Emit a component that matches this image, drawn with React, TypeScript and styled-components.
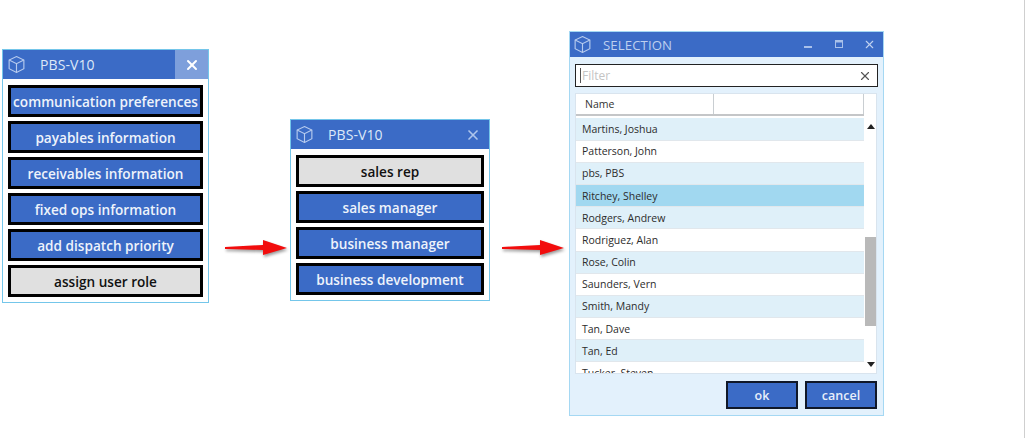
import styled, { createGlobalStyle } from 'styled-components'
import { X } from 'lucide-react'

const GlobalStyle = createGlobalStyle`
  html, body {
    margin: 0;
    padding: 0;
    background: #fff;
  }
  body {
    font-family: 'Open Sans', 'Noto Sans', sans-serif;
  }
`

const Desktop = styled.div`
  position: relative;
  width: 1025px;
  height: 438px;
  overflow: hidden;
  background: #fff;
  border-right: 1px solid #cfcfcf;
  box-sizing: border-box;
`

const Window = styled.div<{ $x: number; $y: number; $w: number; $h: number }>`
  position: absolute;
  left: ${(p) => p.$x}px;
  top: ${(p) => p.$y}px;
  width: ${(p) => p.$w}px;
  height: ${(p) => p.$h}px;
  box-sizing: border-box;
  border: 1px solid #74c6ea;
  background: #fff;
  display: flex;
  flex-direction: column;
`

const TitleBar = styled.div`
  height: 29px;
  flex: none;
  background: #3b6bc6;
  color: #dde8f8;
  display: flex;
  align-items: center;
  padding-left: 5px;
`

const TitleText = styled.span`
  margin-left: 15px;
  font-size: 14px;
  letter-spacing: 0.1px;
  flex: 1;
`

const CloseBox = styled.div<{ $active?: boolean }>`
  width: ${(p) => (p.$active ? '33px' : '32px')};
  align-self: stretch;
  display: flex;
  align-items: center;
  justify-content: center;
  background: ${(p) => (p.$active ? '#7e9fdb' : 'transparent')};
  color: ${(p) => (p.$active ? '#fff' : '#aec5ec')};
`

const ButtonStack = styled.div`
  display: flex;
  flex-direction: column;
  gap: 4px;
  padding: 6px 5px 0;
`

const ActionButton = styled.div<{ $muted?: boolean }>`
  height: 32px;
  box-sizing: border-box;
  border: 3px solid #000;
  background: ${(p) => (p.$muted ? '#e0e0e0' : '#3b6bc6')};
  color: ${(p) => (p.$muted ? '#111' : '#eef3fb')};
  font-size: 13.6px;
  font-weight: 600;
  display: flex;
  align-items: center;
  justify-content: center;
  white-space: nowrap;
`

const SelectionWindow = styled(Window)`
  background: #e3f1fc;
  border-color: #a5d8f3;
`

const SelectionTitle = styled(TitleBar)`
  height: 25px;
  color: #bdd0ef;
  padding-left: 4px;
`

const SelectionText = styled(TitleText)`
  margin-left: 12px;
  font-size: 13.2px;
`

const WindowControl = styled.div`
  width: 31px;
  margin-right: 1.5px;
  align-self: stretch;
  display: flex;
  align-items: center;
  justify-content: center;

  &:last-child {
    width: 27px;
    margin-right: 0;
  }
`

const SelectionBody = styled.div`
  flex: 1;
  display: flex;
  flex-direction: column;
  padding: 7px 5px 6px;
  min-height: 0;
`

const FilterBox = styled.div`
  height: 23px;
  flex: none;
  box-sizing: border-box;
  border: 1px solid #222;
  background: #fff;
  display: flex;
  align-items: center;
  padding: 0 5px 0 4px;
  color: #c4c4c4;
  font-size: 12px;
`

const Caret = styled.span`
  width: 1px;
  height: 15px;
  background: #555;
  margin-right: 1px;
`

const FilterLabel = styled.span`
  flex: 1;
`

const Grid = styled.div`
  margin: 6px 1px 0 0;
  height: 281px;
  flex: none;
  box-sizing: border-box;
  border: 1px solid #d9e4ee;
  background: #fff;
  display: flex;
  overflow: hidden;
`

const GridMain = styled.div`
  width: 288px;
  flex: none;
  display: flex;
  flex-direction: column;
  overflow: hidden;
`

const HeaderRow = styled.div`
  height: 22px;
  flex: none;
  box-sizing: border-box;
  border-bottom: 2px solid #c4c6c8;
  margin-bottom: 2.4px;
  display: flex;
  background: #fff;
  color: #333;
  font-size: 10.5px;
`

const HeaderCell = styled.div<{ $w: number }>`
  width: ${(p) => p.$w}px;
  box-sizing: border-box;
  padding-left: 9px;
  display: flex;
  align-items: center;
  border-right: 1px solid #c9ced2;
`

const NameRow = styled.div<{ $tone: 'plain' | 'alt' | 'selected' }>`
  height: 22.2px;
  flex: none;
  box-sizing: border-box;
  border-bottom: 1px solid #e1e7ec;
  padding-left: 6px;
  display: flex;
  align-items: center;
  color: #2c2c2c;
  font-size: 10.5px;
  background: ${(p) =>
    p.$tone === 'selected' ? '#a1d8f0' : p.$tone === 'alt' ? '#dff0f9' : '#fff'};
`

const ScrollTrack = styled.div`
  flex: 1;
  position: relative;
`

const ScrollThumb = styled.div`
  position: absolute;
  left: 1px;
  top: 143px;
  width: 11px;
  height: 89px;
  background: #b9b9b9;
`

const ScrollArrow = styled.div<{ $down?: boolean }>`
  position: absolute;
  left: 3px;
  ${(p) => (p.$down ? 'bottom: 6px;' : 'top: 30px;')}
  width: 0;
  height: 0;
  border-left: 4px solid transparent;
  border-right: 4px solid transparent;
  ${(p) => (p.$down ? 'border-top: 5px solid #222;' : 'border-bottom: 5px solid #222;')}
`

const DialogFooter = styled.div`
  display: flex;
  justify-content: flex-end;
  gap: 7px;
  margin-top: 7px;
  padding-right: 1px;
`

const DialogButton = styled.div`
  width: 72px;
  height: 28px;
  box-sizing: border-box;
  border: 2px solid #101828;
  background: #3b6bc6;
  color: #e8effa;
  font-size: 12.5px;
  font-weight: 600;
  display: flex;
  align-items: center;
  justify-content: center;
`

const ArrowMark = styled.svg<{ $x: number; $y: number }>`
  position: absolute;
  left: ${(p) => p.$x}px;
  top: ${(p) => p.$y}px;
  filter: drop-shadow(1px 2px 1.5px rgba(0, 0, 0, 0.4));
`

function CubeIcon() {
  return (
    <svg width="17" height="17" viewBox="1 1 15 15" fill="none" stroke="#b7cbee" strokeWidth="1">
      <path d="M8.5 1.5 15 4.6v7.6l-6.5 3.3L2 12.2V4.6z" />
      <path d="M2 4.6l6.5 3.2L15 4.6M8.5 7.8v7.7" />
    </svg>
  )
}

function RedArrow({ x, y }: { x: number; y: number }) {
  return (
    <ArrowMark $x={x} $y={y} width="70" height="24" viewBox="0 0 70 24">
      <path d="M1 8 L39 6 L39 1 L63 9 L39 16 L39 11 L1 10z" fill="#f20d0d" />
    </ArrowMark>
  )
}

const firstMenu = [
  'communication preferences',
  'payables information',
  'receivables information',
  'fixed ops information',
  'add dispatch priority',
]

const secondMenu = ['sales manager', 'business manager', 'business development']

const names = [
  'Martins, Joshua',
  'Patterson, John',
  'pbs, PBS',
  'Ritchey, Shelley',
  'Rodgers, Andrew',
  'Rodriguez, Alan',
  'Rose, Colin',
  'Saunders, Vern',
  'Smith, Mandy',
  'Tan, Dave',
  'Tan, Ed',
  'Tucker, Steven',
]

const toneFor = (index: number) => {
  if (index === 3) return 'selected'
  return index % 2 === 0 ? 'alt' : 'plain'
}

export default function App() {
  return (
    <>
      <GlobalStyle />
      <Desktop>
        <Window $x={2} $y={49} $w={207} $h={254}>
          <TitleBar>
            <CubeIcon />
            <TitleText>PBS-V10</TitleText>
            <CloseBox $active>
              <X size={16} strokeWidth={3} />
            </CloseBox>
          </TitleBar>
          <ButtonStack>
            {firstMenu.map((label) => (
              <ActionButton key={label}>{label}</ActionButton>
            ))}
            <ActionButton $muted>assign user role</ActionButton>
          </ButtonStack>
        </Window>

        <RedArrow x={224} y={239} />

        <Window $x={290} $y={119} $w={200} $h={182}>
          <TitleBar>
            <CubeIcon />
            <TitleText>PBS-V10</TitleText>
            <CloseBox>
              <X size={16} strokeWidth={2.5} />
            </CloseBox>
          </TitleBar>
          <ButtonStack>
            <ActionButton $muted>sales rep</ActionButton>
            {secondMenu.map((label) => (
              <ActionButton key={label}>{label}</ActionButton>
            ))}
          </ButtonStack>
        </Window>

        <RedArrow x={501} y={239} />

        <SelectionWindow $x={569} $y={31} $w={315} $h={385}>
          <SelectionTitle>
            <CubeIcon />
            <SelectionText>SELECTION</SelectionText>
            <WindowControl>
              <svg width="11" height="11" viewBox="0 0 11 11">
                <rect x="3" y="7" width="8" height="2" fill="#a9c1ea" />
              </svg>
            </WindowControl>
            <WindowControl>
              <svg width="11" height="11" viewBox="0 0 11 11" fill="none" stroke="#a9c1ea">
                <rect x="1.5" y="1.5" width="7" height="7" />
                <path d="M1.5 2.5h7" strokeWidth="2" />
              </svg>
            </WindowControl>
            <WindowControl>
              <X size={13} color="#c0d2f0" strokeWidth={2} />
            </WindowControl>
          </SelectionTitle>
          <SelectionBody>
            <FilterBox>
              <Caret />
              <FilterLabel>Filter</FilterLabel>
              <X size={14} color="#555" strokeWidth={2} />
            </FilterBox>
            <Grid>
              <GridMain>
                <HeaderRow>
                  <HeaderCell $w={138}>Name</HeaderCell>
                  <HeaderCell $w={150} />
                </HeaderRow>
                {names.map((name, index) => (
                  <NameRow key={name} $tone={toneFor(index)}>
                    {name}
                  </NameRow>
                ))}
              </GridMain>
              <ScrollTrack>
                <ScrollArrow />
                <ScrollThumb />
                <ScrollArrow $down />
              </ScrollTrack>
            </Grid>
            <DialogFooter>
              <DialogButton>ok</DialogButton>
              <DialogButton>cancel</DialogButton>
            </DialogFooter>
          </SelectionBody>
        </SelectionWindow>
      </Desktop>
    </>
  )
}
